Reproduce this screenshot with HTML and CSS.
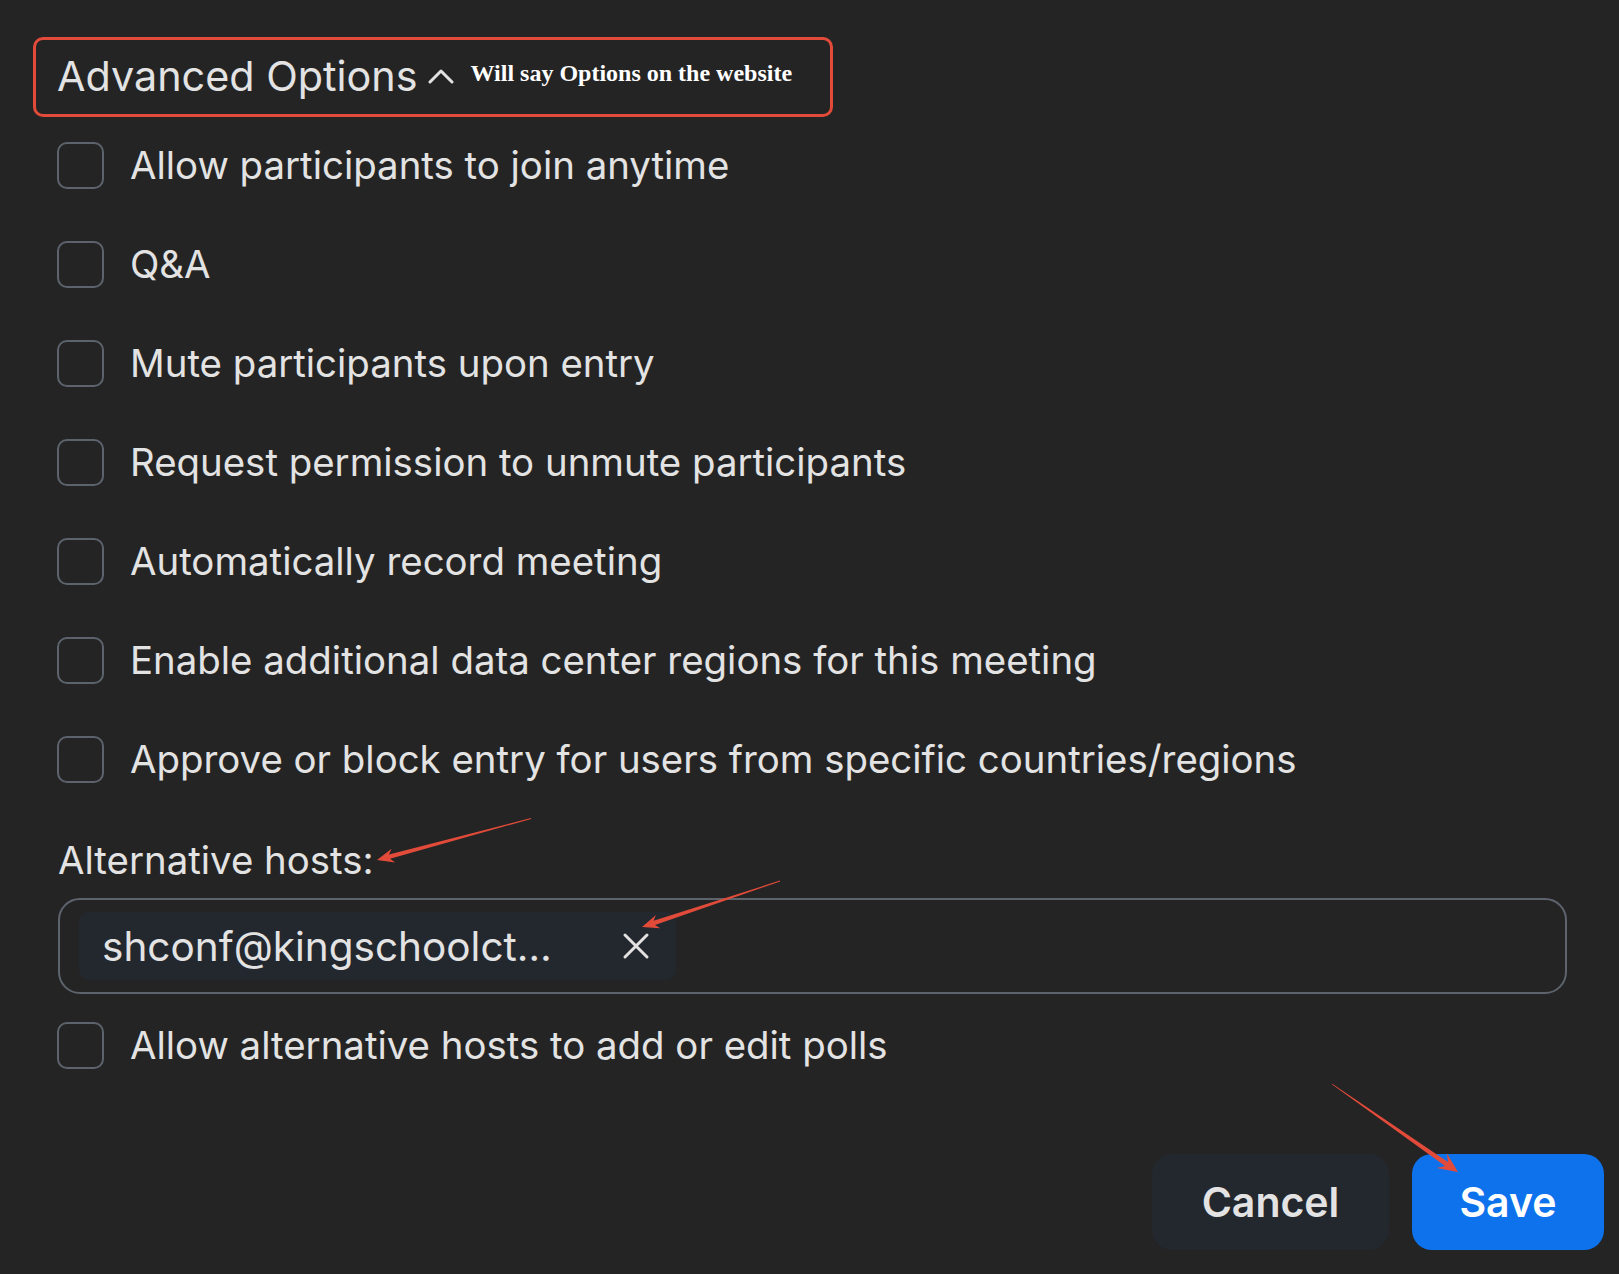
FILE: index.html
```html
<!DOCTYPE html>
<html lang="en">
<head>
<meta charset="utf-8">
<title>Advanced Options</title>
<link rel="stylesheet" href="styles.css">
</head>
<body>
<div class="page">
  <div class="header">
    <span class="title">Advanced Options</span>
    <svg class="chevron" width="26" height="16" viewBox="0 0 26 16"><polyline points="2,14 13,3 24,14" fill="none" stroke="#e2e2e2" stroke-width="3" stroke-linecap="round" stroke-linejoin="round"/></svg>
    <span class="note">Will say Options on the website</span>
  </div>

  <ul class="options">
    <li class="row"><span class="box"></span><span class="label">Allow participants to join anytime</span></li>
    <li class="row"><span class="box"></span><span class="label">Q&amp;A</span></li>
    <li class="row"><span class="box"></span><span class="label">Mute participants upon entry</span></li>
    <li class="row"><span class="box"></span><span class="label">Request permission to unmute participants</span></li>
    <li class="row"><span class="box"></span><span class="label">Automatically record meeting</span></li>
    <li class="row"><span class="box"></span><span class="label">Enable additional data center regions for this meeting</span></li>
    <li class="row"><span class="box"></span><span class="label">Approve or block entry for users from specific countries/regions</span></li>
  </ul>

  <div class="hosts">
    <div class="hosts-label">Alternative hosts:</div>
    <div class="hosts-input">
      <div class="chip">
        <span class="chip-text">shconf@kingschoolct…</span>
        <svg class="chip-x" width="28" height="28" viewBox="0 0 28 28"><path d="M3 3 L25 25 M25 3 L3 25" stroke="#e2e2e2" stroke-width="3" stroke-linecap="round"/></svg>
      </div>
    </div>
    <div class="row polls"><span class="box"></span><span class="label">Allow alternative hosts to add or edit polls</span></div>
  </div>

  <div class="actions">
    <button class="btn cancel">Cancel</button>
    <button class="btn save">Save</button>
  </div>
</div>

<svg class="annotations" width="1619" height="1274" viewBox="0 0 1619 1274">
  <polygon fill="#e24b3a" points="530.9,818.1 389.0,854.5 391.6,848.8 377,860 395.2,862.4 390.1,858.8 531.1,818.9"/>
  <polygon fill="#e24b3a" points="779.9,880.6 653.6,920.8 655.9,915.0 642,927 660.3,928.3 655.0,925.0 780.1,881.4"/>
  <polygon fill="#e24b3a" points="1331.8,1084.3 1445.1,1166.0 1436.5,1167.9 1458,1172 1446.8,1153.2 1448.0,1161.9 1332.2,1083.7"/>
</svg>
</body>
</html>
```

FILE: styles.css
```css
html, body {
  margin: 0;
  padding: 0;
}

body {
  background: #242424;
  color: #e3e3e3;
  font-family: Inter, "Noto Sans", "Liberation Sans", sans-serif;
  width: 1619px;
  height: 1274px;
  position: relative;
  overflow: hidden;
}

.page {
  padding: 37px 15px 0 33px;
}

.header {
  display: flex;
  align-items: center;
  box-sizing: border-box;
  width: 800px;
  height: 80px;
  border: 3.5px solid #e24b3a;
  border-radius: 10px;
  padding-left: 21px;
}

.title {
  font-size: 41.3px;
  line-height: 1;
  color: #e3e3e3;
}

.chevron {
  margin-left: 11px;
  margin-bottom: 2px;
}

.note {
  margin-left: 16px;
  margin-bottom: 8px;
  font-family: "Liberation Serif", "Times New Roman", serif;
  font-weight: 700;
  font-size: 24px;
  color: #ffffff;
}

.options {
  list-style: none;
  margin: 25px 0 0 0;
  padding: 0 0 0 24px;
  display: flex;
  flex-direction: column;
  gap: 52px;
}

.row {
  display: flex;
  align-items: center;
  height: 47px;
  gap: 26px;
}

.box {
  flex: none;
  box-sizing: border-box;
  width: 47px;
  height: 47px;
  border: 2.5px solid #5c636d;
  border-radius: 10px;
}

.label {
  font-size: 38.4px;
  line-height: 47px;
  white-space: nowrap;
}

.hosts {
  padding-left: 24px;
}

.hosts-label {
  margin-top: 54px;
  font-size: 38.4px;
  line-height: 47px;
  padding-left: 1px;
}

.hosts-input {
  margin-top: 14px;
  margin-left: 1px;
  box-sizing: border-box;
  width: 1509px;
  height: 96px;
  border: 2px solid #5d646e;
  border-radius: 22px;
  padding: 10px 19px;
  display: flex;
  align-items: center;
}

.chip {
  box-sizing: border-box;
  width: 597px;
  height: 68px;
  background: #23272e;
  border-radius: 10px;
  padding: 0 26px 0 23px;
  display: flex;
  align-items: center;
  justify-content: space-between;
}

.chip-text {
  font-size: 40.5px;
  white-space: nowrap;
}

.polls {
  margin-top: 28px;
}

.actions {
  display: flex;
  justify-content: flex-end;
  gap: 23px;
  margin-top: 85px;
}

.btn {
  box-sizing: border-box;
  height: 96px;
  border: none;
  border-radius: 20px;
  font-family: Inter, "Noto Sans", "Liberation Sans", sans-serif;
  font-size: 41px;
  font-weight: 600;
  padding: 0;
}

.cancel {
  width: 237px;
  background: #23272e;
  color: #e3e3e3;
}

.save {
  width: 192px;
  background: #0e72ec;
  color: #ffffff;
}

.annotations {
  position: absolute;
  top: 0;
  left: 0;
  pointer-events: none;
}
```
